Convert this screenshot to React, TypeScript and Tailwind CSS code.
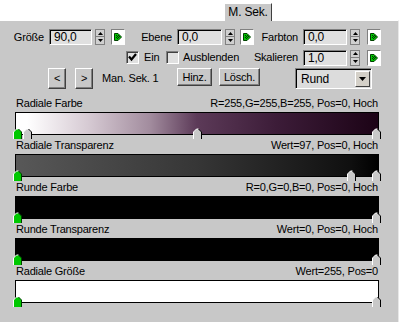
import React from 'react';

const font = "font-['Liberation_Sans',Arial,sans-serif] text-[11px] tracking-[-0.2px]";

const GreenButton = () => (
  <div className="w-[14px] h-[16px] border border-t-[#808080] border-l-[#808080] border-b-white border-r-white bg-white flex items-center justify-center shrink-0">
    <svg width="10" height="10" viewBox="0 0 10 10">
      <polygon points="1.5,1.5 5,1.5 8.5,5 5,8.5 1.5,8.5" fill="#00c800" stroke="#004000" strokeWidth="1" />
      <rect x="3" y="3" width="1" height="1" fill="#003000" />
      <rect x="5" y="3" width="1" height="1" fill="#003000" />
      <rect x="4" y="4" width="1" height="1" fill="#003000" />
      <rect x="6" y="4" width="1" height="1" fill="#003000" />
      <rect x="3" y="5" width="1" height="1" fill="#003000" />
      <rect x="5" y="5" width="1" height="1" fill="#003000" />
      <rect x="4" y="6" width="1" height="1" fill="#003000" />
    </svg>
  </div>
);

const Spinner = () => (
  <div className="w-[10px] h-[16px] flex flex-col border border-[#808080] bg-[#d0d0d0] shrink-0">
    <div className="h-[7px] flex items-center justify-center border-b border-[#808080]">
      <svg width="5" height="3" viewBox="0 0 5 3"><polygon points="2.5,0 5,3 0,3" fill="#000" /></svg>
    </div>
    <div className="flex-1 flex items-center justify-center">
      <svg width="5" height="3" viewBox="0 0 5 3"><polygon points="0,0 5,0 2.5,3" fill="#000" /></svg>
    </div>
  </div>
);

const Field = ({ value, w }: { value: string; w: string }) => (
  <div className={`${w} h-[16px] bg-[#e0e0e0] border border-t-[#808080] border-l-[#808080] border-b-white border-r-white shadow-[inset_1px_1px_0_#000] flex items-center pl-[4px] text-[12px] shrink-0`}>
    {value}
  </div>
);

const Check = ({ checked }: { checked?: boolean }) => (
  <div className="w-[13px] h-[13px] bg-[#e0e0e0] border border-t-[#808080] border-l-[#808080] border-b-white border-r-white shadow-[inset_1px_1px_0_#404040] flex items-center justify-center shrink-0">
    {checked && (
      <svg width="9" height="9" viewBox="0 0 9 9">
        <polyline points="1,3.5 3.5,6.5 8,1" fill="none" stroke="#000" strokeWidth="2.2" />
      </svg>
    )}
  </div>
);

const raised = 'bg-[#c8c8c8] border border-t-white border-l-white border-b-[#404040] border-r-[#404040] shadow-[inset_-1px_-1px_0_#808080] flex items-center justify-center shrink-0';

const Marker = ({ green, left }: { green?: boolean; left: string }) => (
  <svg className={`absolute top-[15px] ${left}`} width="9" height="11" viewBox="0 0 9 11">
    <polygon points="0.5,11 0.5,4 3.5,1 5.5,1 8.5,4 8.5,11" fill={green ? '#00c800' : '#c8c8c8'} />
    <polyline points="0.5,11 0.5,4 3.5,1 5.5,1" fill="none" stroke="#ffffff" strokeWidth="1" />
    <polyline points="5.5,1 8.5,4 8.5,11" fill="none" stroke={green ? '#004000' : '#000'} strokeWidth="1" />
  </svg>
);

const rows = [
  {
    label: 'Radiale Farbe',
    info: 'R=255,G=255,B=255, Pos=0, Hoch',
    bar: 'bg-[linear-gradient(to_right,#ffffff_0%,#ffffff_3%,#d6cad3_20%,#a28c9e_37%,#5c3a58_50%,#3c1c38_72%,#1c0316_100%)]',
    markers: ['left-[7px]', 'left-[177px]', 'left-[356px]'],
  },
  {
    label: 'Radiale Transparenz',
    info: 'Wert=97, Pos=0, Hoch',
    bar: 'bg-[linear-gradient(to_right,#585858_0%,#363636_50%,#101010_92%,#000000_100%)]',
    markers: ['left-[331px]', 'left-[356px]'],
  },
  { label: 'Runde Farbe', info: 'R=0,G=0,B=0, Pos=0, Hoch', bar: 'bg-black', markers: ['left-[356px]'] },
  { label: 'Runde Transparenz', info: 'Wert=0, Pos=0, Hoch', bar: 'bg-black', markers: ['left-[356px]'] },
  { label: 'Radiale Größe', info: 'Wert=255, Pos=0', bar: 'bg-white', markers: ['left-[356px]'] },
];

export default function App() {
  return (
    <div className={`w-[399px] h-[322px] bg-white text-black overflow-hidden ${font}`}>
      {/* tab strip */}
      <div className="h-[20px] flex items-end">
        <div className="ml-[224px] w-[48px] h-[18px] -mb-px relative z-10 bg-[#c8c8c8] border-t border-l border-white border-r border-r-[#404040] flex items-center justify-center pb-[1px] text-[12px]">
          M. Sek.
        </div>
      </div>

      {/* panel */}
      <div className="h-[302px] bg-[#c8c8c8] border-t border-white border-r border-r-[#e8e8e8] pt-[8px]">
        {/* row 1 */}
        <div className="flex items-center h-[16px]">
          <span className="w-[45px] text-right pr-[1px]">Größe</span>
          <div className="ml-[4px]"><Field value="90,0" w="w-[43px]" /></div>
          <div className="ml-[3px]"><Spinner /></div>
          <div className="ml-[6px]"><GreenButton /></div>
          <span className="w-[52px] text-right pr-[5px]">Ebene</span>
          <Field value="0,0" w="w-[45px]" />
          <div className="ml-[3px]"><Spinner /></div>
          <div className="ml-[5px]"><GreenButton /></div>
          <span className="w-[49px] text-right pr-[5px]">Farbton</span>
          <Field value="0,0" w="w-[44px]" />
          <div className="ml-[3px]"><Spinner /></div>
          <div className="ml-[7px]"><GreenButton /></div>
        </div>

        {/* row 2 */}
        <div className="flex items-center h-[15px] mt-[5px]">
          <div className="ml-[126px]"><Check checked /></div>
          <span className="w-[27px] pl-[5px]">Ein</span>
          <Check />
          <div className="w-[124px] flex justify-between pl-[4px] pr-[5px]">
            <span>Ausblenden</span>
            <span>Skalieren</span>
          </div>
          <Field value="1,0" w="w-[44px]" />
          <div className="ml-[3px]"><Spinner /></div>
          <div className="ml-[7px]"><GreenButton /></div>
        </div>

        {/* row 3 */}
        <div className="flex items-start h-[21px] mt-[3px]">
          <div className={`ml-[48px] w-[18px] h-[21px] ${raised}`}>&lt;</div>
          <div className={`ml-[9px] w-[18px] h-[21px] ${raised}`}>&gt;</div>
          <span className="w-[84px] pl-[9px] h-[21px] flex items-center">Man. Sek. 1</span>
          <div className={`w-[35px] h-[18px] ${raised}`}>Hinz.</div>
          <div className={`ml-[7px] w-[41px] h-[18px] ${raised}`}>Lösch.</div>
          <div className="ml-[35px] w-[77px] h-[21px] bg-[#dcdcdc] border border-t-[#808080] border-l-[#808080] border-b-white border-r-white shadow-[inset_1px_1px_0_#000] flex items-center justify-between pl-[5px] pr-[1px]">
            <span className="text-[12px]">Rund</span>
            <div className="w-[15px] h-[16px] bg-[#d4d0c8] border border-t-white border-l-white border-b-[#404040] border-r-[#404040] flex items-center justify-center">
              <svg width="7" height="4" viewBox="0 0 7 4"><polygon points="0,0 7,0 3.5,4" fill="#000" /></svg>
            </div>
          </div>
        </div>

        {/* gradient rows */}
        <div className="mt-[8px] flex flex-col gap-[4px]">
          {rows.map((r) => (
            <div key={r.label}>
              <div className="ml-[16px] w-[362px] h-[13px] leading-[13px] flex justify-between">
                <span>{r.label}</span>
                <span>{r.info}</span>
              </div>
              <div className={`relative ml-[15px] mt-[2px] w-[364px] h-[23px] border border-black ${r.bar}`}>
                <Marker green left="left-[-3px]" />
                {r.markers.map((m) => (
                  <Marker key={m} left={m} />
                ))}
              </div>
            </div>
          ))}
        </div>
      </div>
    </div>
  );
}
